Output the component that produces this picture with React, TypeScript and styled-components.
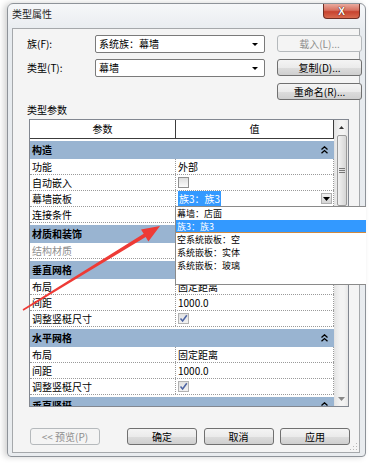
import React from 'react';
import styled, { createGlobalStyle } from 'styled-components';

const GlobalStyle = createGlobalStyle`
  html, body {
    margin: 0;
    padding: 0;
    background: #fff;
  }
  body {
    font-family: "Noto Sans CJK SC", "Liberation Sans", sans-serif;
    font-size: 10px;
    color: #000;
  }
  * {
    box-sizing: border-box;
  }
`;

const Page = styled.div`
  position: relative;
  width: 378px;
  height: 465px;
  padding: 3px 0 0 7px;
  overflow: hidden;
`;

const Window = styled.div`
  width: 359px;
  height: 454px;
  display: flex;
  flex-direction: column;
  padding: 0 5px 3px 4px;
  background: linear-gradient(#f6f7f9, #e7ebef 28px, #e9ecef);
  border: 1px solid #8e9399;
  border-radius: 6px 6px 4px 4px;
  box-shadow: -3px 0 6px rgba(0, 0, 0, 0.18);
`;

const TitleBar = styled.div`
  height: 24px;
  display: flex;
  justify-content: space-between;
  align-items: flex-start;
`;

const Title = styled.div`
  padding-top: 3px;
  line-height: 14px;
  font-size: 10px;
  color: #1e1e1e;
`;

const CloseButton = styled.div`
  width: 37px;
  height: 15px;
  display: flex;
  align-items: center;
  justify-content: center;
  background: linear-gradient(#eaa99d, #d7705f 45%, #c7432f 55%, #d86a4f);
  border: 1px solid #6e2e24;
  border-top: none;
  border-radius: 0 0 4px 4px;
  font-family: "Liberation Sans", sans-serif;
  font-weight: bold;
  font-size: 10px;
  color: #fff;
  text-shadow: 0 0 1px #4a140c, 0 0 1px #4a140c;
`;

const Client = styled.div`
  position: relative;
  flex: 1;
  padding: 6px 9px 0 14px;
  background: #f4f4f4;
  border: 1px solid #a5a8ab;
`;

const FormGrid = styled.div`
  display: grid;
  grid-template-columns: 56px 170px 85px;
  grid-auto-rows: 18px;
  column-gap: 12px;
  row-gap: 6px;
`;

const FieldLabel = styled.div`
  line-height: 18px;
`;

const Combo = styled.div`
  display: flex;
  align-items: center;
  justify-content: space-between;
  padding: 0 6px 0 3px;
  background: #fff;
  border: 1px solid #7a7a7a;
  border-radius: 2px;
  line-height: 16px;
`;

const ComboArrow = styled.span`
  width: 0;
  height: 0;
  border-left: 3px solid transparent;
  border-right: 3px solid transparent;
  border-top: 3px solid #000;
`;

const Button = styled.div<{ $disabled?: boolean; $col?: number }>`
  grid-column: ${(p) => p.$col ?? 'auto'};
  width: 70px;
  height: 17px;
  display: flex;
  align-items: center;
  justify-content: center;
  line-height: 15px;
  border-radius: 3px;
  border: 1px solid ${(p) => (p.$disabled ? '#b5b9bc' : '#707070')};
  color: ${(p) => (p.$disabled ? '#8e8e8e' : '#000')};
  background: ${(p) =>
    p.$disabled
      ? '#f4f4f4'
      : 'linear-gradient(#f4f4f4, #ebebeb 50%, #dddddd 51%, #cfcfcf)'};
`;

const WideButton = styled(Button)`
  width: 85px;
`;

const SectionLabel = styled.div`
  height: 18px;
  line-height: 18px;
`;

const PropGrid = styled.div`
  position: relative;
  margin-left: 2px;
  width: 320px;
  height: 288px;
  display: flex;
  background: #fff;
  border: 1px solid #828790;
`;

const TableArea = styled.div`
  width: 304px;
  display: flex;
  flex-direction: column;
  overflow: hidden;
`;

const HeaderRow = styled.div`
  height: 19px;
  flex-shrink: 0;
  display: flex;
  border-bottom: 1px solid #3c3c3c;
`;

const HeaderCell = styled.div<{ $w?: number }>`
  width: ${(p) => (p.$w ? `${p.$w}px` : 'auto')};
  flex: ${(p) => (p.$w ? 'none' : '1')};
  text-align: center;
  line-height: 18px;
  border-right: 1px solid #3c3c3c;
`;

const GroupBand = styled.div`
  margin-top: 2px;
  height: 18px;
  flex-shrink: 0;
  display: flex;
  align-items: center;
  justify-content: space-between;
  padding: 0 6px 0 2px;
  background: #99b4d1;
  font-weight: bold;
  line-height: 18px;
`;

const Row = styled.div`
  height: 16px;
  flex-shrink: 0;
  display: flex;
  border-bottom: 1px dotted #9a9a9a;
`;

const NameCell = styled.div<{ $muted?: boolean }>`
  width: 146px;
  padding-left: 2px;
  line-height: 15px;
  color: ${(p) => (p.$muted ? '#8f8f8f' : '#000')};
  border-right: 1px dotted #9a9a9a;
`;

const ValueCell = styled.div`
  flex: 1;
  display: flex;
  align-items: center;
  justify-content: space-between;
  padding: 0 1px 0 2px;
  line-height: 15px;
  border-right: 1px dotted #9a9a9a;
`;

const Selected = styled.span`
  background: #3399ff;
  color: #fff;
  padding: 0 1px;
`;

const DropButton = styled.span`
  width: 11px;
  height: 11px;
  display: flex;
  align-items: center;
  justify-content: center;
  background: linear-gradient(#f2f2f2, #d4d4d4);
  border: 1px solid #b0b0b0;
`;

const Check = styled.span<{ $checked?: boolean }>`
  width: 11px;
  height: 11px;
  display: flex;
  align-items: center;
  justify-content: center;
  border: 1px solid ${(p) => (p.$checked ? '#b2b2b2' : '#8f8f8f')};
  background: ${(p) =>
    p.$checked ? 'linear-gradient(#e2e2e2, #f2f2f2)' : 'linear-gradient(#dedede, #fbfbfb)'};
`;

const Scrollbar = styled.div`
  width: 14px;
  display: flex;
  flex-direction: column;
  align-items: center;
  background: linear-gradient(90deg, #e6e6e6, #f3f3f3 40%, #f3f3f3 70%, #e6e6e6);
  border-left: 1px solid #e2e2e2;
`;

const ScrollArrow = styled.div`
  height: 15px;
  width: 100%;
  display: flex;
  align-items: center;
  justify-content: center;
`;

const Thumb = styled.div`
  width: 10px;
  height: 71px;
  display: flex;
  align-items: center;
  justify-content: center;
  background: linear-gradient(90deg, #f2f2f2, #e4e4e4 50%, #d6d6d6);
  border: 1px solid #9a9a9a;
  border-radius: 2px;
`;

const Track = styled.div`
  flex: 1;
`;

const Popup = styled.div`
  position: absolute;
  left: 145px;
  top: 86px;
  width: 191px;
  height: 79px;
  background: #fff;
  border: 1px solid #8a8a8a;
  border-right: none;
  z-index: 2;
`;

const PopupItem = styled.div<{ $active?: boolean }>`
  height: 13px;
  display: flex;
  align-items: center;
  padding-left: 1px;
  font-size: 9px;
  line-height: 12px;
  white-space: nowrap;
  overflow: hidden;
  color: ${(p) => (p.$active ? '#fff' : '#000')};
  background: ${(p) => (p.$active ? '#3399ff' : 'transparent')};
  box-shadow: ${(p) => (p.$active ? 'inset 0 -1px 0 #d08a40' : 'none')};
`;

const Footer = styled.div`
  margin-top: 21px;
  height: 17px;
  display: flex;
  align-items: center;
  justify-content: space-between;
  padding: 0 0 0 3px;
`;

const FooterGroup = styled.div`
  display: flex;
  gap: 6.5px;
`;

const Grip = styled.svg`
  position: absolute;
  right: 1px;
  bottom: 1px;
`;

const Overlay = styled.svg`
  position: absolute;
  left: 0;
  top: 0;
  pointer-events: none;
  z-index: 5;
`;

const Collapse = () => (
  <svg width="7" height="8" viewBox="0 0 7 8">
    <path d="M0.5 3.5 L3.5 0.8 L6.5 3.5 M0.5 7.2 L3.5 4.5 L6.5 7.2" fill="none" stroke="#000" strokeWidth="1.3" />
  </svg>
);

const CheckMark = () => (
  <svg width="9" height="9" viewBox="0 0 9 9">
    <path d="M1.5 4.5 L3.6 7 L7.8 1.2" fill="none" stroke="#4d64a3" strokeWidth="1.5" />
  </svg>
);

const DownTri = ({ color = '#000' }: { color?: string }) => (
  <svg width="7" height="4" viewBox="0 0 7 4">
    <path d="M0 0 H7 L3.5 4 Z" fill={color} />
  </svg>
);

type Prop = { name: string; value?: React.ReactNode; muted?: boolean };
type Group = { title: string; rows: Prop[] };

const groups: Group[] = [
  {
    title: '构造',
    rows: [
      { name: '功能', value: '外部' },
      { name: '自动嵌入', value: <Check /> },
      {
        name: '幕墙嵌板',
        value: (
          <>
            <Selected>族3：族3</Selected>
            <DropButton>
              <DownTri />
            </DropButton>
          </>
        ),
      },
      { name: '连接条件' },
    ],
  },
  { title: '材质和装饰', rows: [{ name: '结构材质', muted: true }] },
  {
    title: '垂直网格',
    rows: [
      { name: '布局', value: '固定距离' },
      { name: '间距', value: '1000.0' },
      {
        name: '调整竖梃尺寸',
        value: (
          <Check $checked>
            <CheckMark />
          </Check>
        ),
      },
    ],
  },
  {
    title: '水平网格',
    rows: [
      { name: '布局', value: '固定距离' },
      { name: '间距', value: '1000.0' },
      {
        name: '调整竖梃尺寸',
        value: (
          <Check $checked>
            <CheckMark />
          </Check>
        ),
      },
    ],
  },
  { title: '垂直竖梃', rows: [] },
];

const options = ['幕墙：店面', '族3：族3', '空系统嵌板：空', '系统嵌板：实体', '系统嵌板：玻璃'];

export default function App() {
  return (
    <>
      <GlobalStyle />
      <Page>
        <Window>
          <TitleBar>
            <Title>类型属性</Title>
            <CloseButton>X</CloseButton>
          </TitleBar>
          <Client>
            <FormGrid>
              <FieldLabel>族(F):</FieldLabel>
              <Combo>
                系统族：幕墙
                <ComboArrow />
              </Combo>
              <WideButton $disabled>载入(L)...</WideButton>
              <FieldLabel>类型(T):</FieldLabel>
              <Combo>
                幕墙
                <ComboArrow />
              </Combo>
              <WideButton>复制(D)...</WideButton>
              <WideButton $col={3}>重命名(R)...</WideButton>
            </FormGrid>
            <SectionLabel>类型参数</SectionLabel>
            <PropGrid>
              <TableArea>
                <HeaderRow>
                  <HeaderCell $w={146}>参数</HeaderCell>
                  <HeaderCell>值</HeaderCell>
                </HeaderRow>
                {groups.map((g) => (
                  <React.Fragment key={g.title}>
                    <GroupBand>
                      {g.title}
                      <Collapse />
                    </GroupBand>
                    {g.rows.map((r, i) => (
                      <Row key={i}>
                        <NameCell $muted={r.muted}>{r.name}</NameCell>
                        <ValueCell>{r.value}</ValueCell>
                      </Row>
                    ))}
                  </React.Fragment>
                ))}
              </TableArea>
              <Scrollbar>
                <ScrollArrow>
                  <svg width="5" height="3" viewBox="0 0 5 3">
                    <path d="M0 3 H5 L2.5 0 Z" fill="#333" />
                  </svg>
                </ScrollArrow>
                <Thumb>
                  <svg width="6" height="6" viewBox="0 0 6 6">
                    <path d="M0 0.5 H6 M0 2.5 H6 M0 4.5 H6" stroke="#777" strokeWidth="1" />
                  </svg>
                </Thumb>
                <Track />
                <ScrollArrow>
                  <DownTri color="#888" />
                </ScrollArrow>
              </Scrollbar>
              <Popup>
                {options.map((o, i) => (
                  <PopupItem key={o} $active={i === 1}>
                    {o}
                  </PopupItem>
                ))}
              </Popup>
            </PropGrid>
            <Footer>
              <Button $disabled>&lt;&lt; 预览(P)</Button>
              <FooterGroup>
                <Button>确定</Button>
                <Button>取消</Button>
                <Button>应用</Button>
              </FooterGroup>
            </Footer>
            <Grip width="8" height="8" viewBox="0 0 8 8">
              <g fill="#b8b8b8">
                <rect x="6" y="0" width="1" height="1" />
                <rect x="3" y="3" width="1" height="1" />
                <rect x="6" y="3" width="1" height="1" />
                <rect x="0" y="6" width="1" height="1" />
                <rect x="3" y="6" width="1" height="1" />
                <rect x="6" y="6" width="1" height="1" />
              </g>
            </Grip>
          </Client>
        </Window>
        <Overlay width="378" height="465" viewBox="0 0 378 465">
          <polygon
            points="22.6,309.3 143.7,233.7 141,229.4 160,226 148.4,241.4 145.7,237.1 23.4,310.7"
            fill="#ee3b36"
          />
        </Overlay>
      </Page>
    </>
  );
}
